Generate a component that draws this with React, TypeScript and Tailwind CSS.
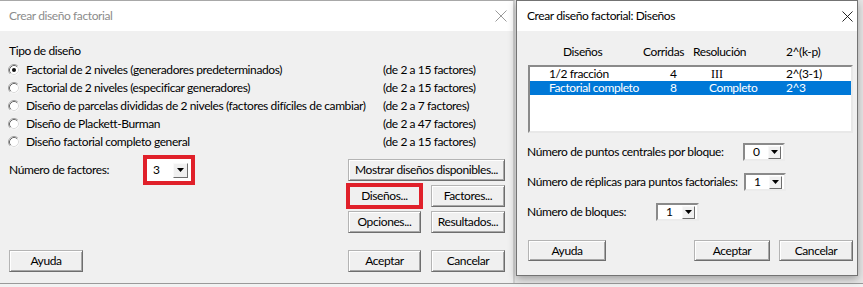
import React from 'react';

const font = { fontFamily: 'Lato, "Liberation Sans", sans-serif', letterSpacing: '-0.4px' };

function CloseIcon({ size, color }: { size: number; color: string }) {
  return (
    <svg width={size} height={size} viewBox="0 0 12 12">
      <path d="M0.5 0.5 L11.5 11.5 M11.5 0.5 L0.5 11.5" stroke={color} strokeWidth="1" fill="none" />
    </svg>
  );
}

function Radio({ checked }: { checked?: boolean }) {
  return (
    <svg width="12" height="12" viewBox="0 0 12 12" className="shrink-0">
      <circle cx="6" cy="6" r="5.5" fill="#fff" />
      <path d="M2.11 9.89 A5.5 5.5 0 0 1 9.89 2.11" stroke="#a0a0a0" fill="none" />
      <path d="M9.89 2.11 A5.5 5.5 0 0 1 2.11 9.89" stroke="#f4f4f4" fill="none" />
      <path d="M2.82 9.18 A4.5 4.5 0 0 1 9.18 2.82" stroke="#6a6a6a" fill="none" />
      <path d="M9.18 2.82 A4.5 4.5 0 0 1 2.82 9.18" stroke="#dcdcdc" fill="none" />
      {checked && <circle cx="6" cy="6" r="2" fill="#111" />}
    </svg>
  );
}

function Arrow() {
  return (
    <svg width="7" height="4" viewBox="0 0 7 4">
      <path d="M0 0 H7 L3.5 4 Z" fill="#000" />
    </svg>
  );
}

function Btn({ children, className = '' }: { children: React.ReactNode; className?: string }) {
  return (
    <div
      className={`flex items-center justify-center whitespace-nowrap bg-[#f0f0f0] border border-[#b4b4b4] border-r-[#6e6e6e] border-b-[#6e6e6e] shadow-[inset_1px_1px_0_#ffffff,inset_-1px_-1px_0_#a8a8a8] text-[12px] text-black ${className}`}
    >
      {children}
    </div>
  );
}

function Combo({ value, className = '' }: { value: string; className?: string }) {
  return (
    <div
      className={`flex items-center justify-between bg-white border-2 border-t-[#8a8a8a] border-l-[#8a8a8a] border-b-[#ececec] border-r-[#ececec] pl-[8px] pr-[2px] text-[12px] ${className}`}
    >
      <span>{value}</span>
      <div className="w-[13px] h-[13px] flex items-center justify-center bg-[#f0f0f0] border border-[#f8f8f8] border-r-[#6e6e6e] border-b-[#6e6e6e]">
        <Arrow />
      </div>
    </div>
  );
}

const options = [
  ['Factorial de 2 niveles (generadores predeterminados)', '(de 2 a 15 factores)'],
  ['Factorial de 2 niveles (especificar generadores)', '(de 2 a 15 factores)'],
  ['Diseño de parcelas divididas de 2 niveles (factores difíciles de cambiar)', '(de 2 a 7 factores)'],
  ['Diseño de Plackett-Burman', '(de 2 a 47 factores)'],
  ['Diseño factorial completo general', '(de 2 a 15 factores)'],
];

function MainDialog() {
  return (
    <div className="absolute left-0 top-0 w-[515px] h-[283px] bg-[#f0f0f0] border-t border-t-[#a8a8a8] border-r-2 border-r-[#d2d2d2] flex flex-col">
      <div className="h-[30px] bg-white flex items-center justify-between pl-[9px] pr-[6px]">
        <span className="text-[12px] text-[#8c8c8c]">Crear diseño factorial</span>
        <CloseIcon size={12} color="#9a9a9a" />
      </div>
      <div className="pl-[9px] pr-[8px] pt-[11px] text-[12px] text-black">
        <div className="h-[18px] flex items-center">Tipo de diseño</div>
        <div className="mt-[1px]">
          {options.map(([label, range], i) => (
            <div key={i} className="h-[18px] flex items-center -ml-[1px]">
              <div className="w-[375px] flex items-center gap-[6px] whitespace-nowrap">
                <Radio checked={i === 0} />
                <span>{label}</span>
              </div>
              <span className="whitespace-nowrap">{range}</span>
            </div>
          ))}
        </div>
        <div className="mt-[4px] flex">
          <div className="w-[339px] h-[30px] flex items-center">
            <span className="w-[134px]">Número de factores:</span>
            <div className="w-[52px] h-[30px] border-4 border-[#e0202a] bg-white flex items-center justify-between pl-[6px] pr-[3px]">
              <span>3</span>
              <div className="w-[15px] h-[15px] flex items-center justify-center bg-[#f0f0f0] border border-[#fafafa] border-r-[#6e6e6e] border-b-[#6e6e6e]">
                <Arrow />
              </div>
            </div>
          </div>
          <div className="pt-[4px] flex flex-col gap-[4px]">
            <Btn className="w-[157px] h-[22px]">Mostrar diseños disponibles...</Btn>
            <div className="flex gap-[10px]">
              <Btn className="w-[73px] h-[22px] outline-4 outline-[#e0202a] outline-offset-[-2px]">Diseños...</Btn>
              <Btn className="w-[74px] h-[22px]">Factores...</Btn>
            </div>
            <div className="flex gap-[10px]">
              <Btn className="w-[73px] h-[22px]">Opciones...</Btn>
              <Btn className="w-[74px] h-[22px]">Resultados...</Btn>
            </div>
          </div>
        </div>
        <div className="mt-[17px] flex justify-between">
          <Btn className="w-[74px] h-[22px]">Ayuda</Btn>
          <div className="flex gap-[10px]">
            <Btn className="w-[73px] h-[22px]">Aceptar</Btn>
            <Btn className="w-[74px] h-[22px]">Cancelar</Btn>
          </div>
        </div>
      </div>
    </div>
  );
}

const designs = [
  { name: '1/2 fracción', runs: '4', res: 'III', gen: '2^(3-1)', selected: false },
  { name: 'Factorial completo', runs: '8', res: 'Completo', gen: '2^3', selected: true },
];

function DesignsDialog() {
  return (
    <div className="absolute left-[516px] top-0 w-[342px] h-[276px] bg-[#f0f0f0] border border-[#737373] shadow-[0_3px_8px_rgba(0,0,0,0.3)] flex flex-col">
      <div className="h-[30px] bg-white flex items-center justify-between pl-[10px] pr-[4px]">
        <span className="text-[12px] text-black">Crear diseño factorial: Diseños</span>
        <CloseIcon size={11} color="#111" />
      </div>
      <div className="pl-[10px] pr-[4px] pt-[12px] text-[12px] text-black">
        <div className="h-[18px] flex items-center pl-[36px] whitespace-nowrap">
          <span className="w-[80px]">Diseños</span>
          <span className="w-[50px]">Corridas</span>
          <span className="w-[93px]">Resolución</span>
          <span>2^(k-p)</span>
        </div>
        <div className="mt-[4px] ml-[1px] h-[68px] bg-white border-2 border-t-[#8a8a8a] border-l-[#8a8a8a] border-b-[#e8e8e8] border-r-[#e8e8e8]">
          {designs.map((d) => (
            <div
              key={d.name}
              className={`h-[14px] leading-[14px] flex items-center pl-[19px] whitespace-nowrap ${d.selected ? 'bg-[#0078d7] text-white' : ''}`}
            >
              <span className="w-[121px]">{d.name}</span>
              <span className="w-[39px]">{d.runs}</span>
              <span
                className="w-[77px]"
                style={d.res === 'III' ? { fontFamily: '"Liberation Serif", serif', paddingLeft: 2, letterSpacing: 0 } : undefined}
              >
                {d.res}
              </span>
              <span>{d.gen}</span>
            </div>
          ))}
        </div>
        <div className="mt-[10px] h-[18px] flex items-center">
          <span className="w-[216px] whitespace-nowrap">Número de puntos centrales por bloque:</span>
          <Combo value="0" className="w-[42px] h-[18px]" />
        </div>
        <div className="mt-[12px] h-[18px] flex items-center">
          <span className="w-[217px] whitespace-nowrap">Número de réplicas para puntos factoriales:</span>
          <Combo value="1" className="w-[42px] h-[18px]" />
        </div>
        <div className="mt-[12px] h-[18px] flex items-center">
          <span className="w-[129px] whitespace-nowrap">Número de bloques:</span>
          <Combo value="1" className="w-[43px] h-[18px]" />
        </div>
        <div className="mt-[19px] flex items-center pl-[1px]">
          <Btn className="w-[78px] h-[21px]">Ayuda</Btn>
          <div className="ml-auto flex gap-[9px]">
            <Btn className="w-[76px] h-[21px]">Aceptar</Btn>
            <Btn className="w-[74px] h-[21px]">Cancelar</Btn>
          </div>
        </div>
      </div>
    </div>
  );
}

export default function App() {
  return (
    <div className="relative w-[863px] h-[287px] overflow-hidden bg-[#e6e6e6]" style={font}>
      <div className="absolute left-0 right-0 top-[283px] h-[4px] bg-[#f2f2f2] border-t border-[#9a9a9a]" />
      <MainDialog />
      <DesignsDialog />
    </div>
  );
}
